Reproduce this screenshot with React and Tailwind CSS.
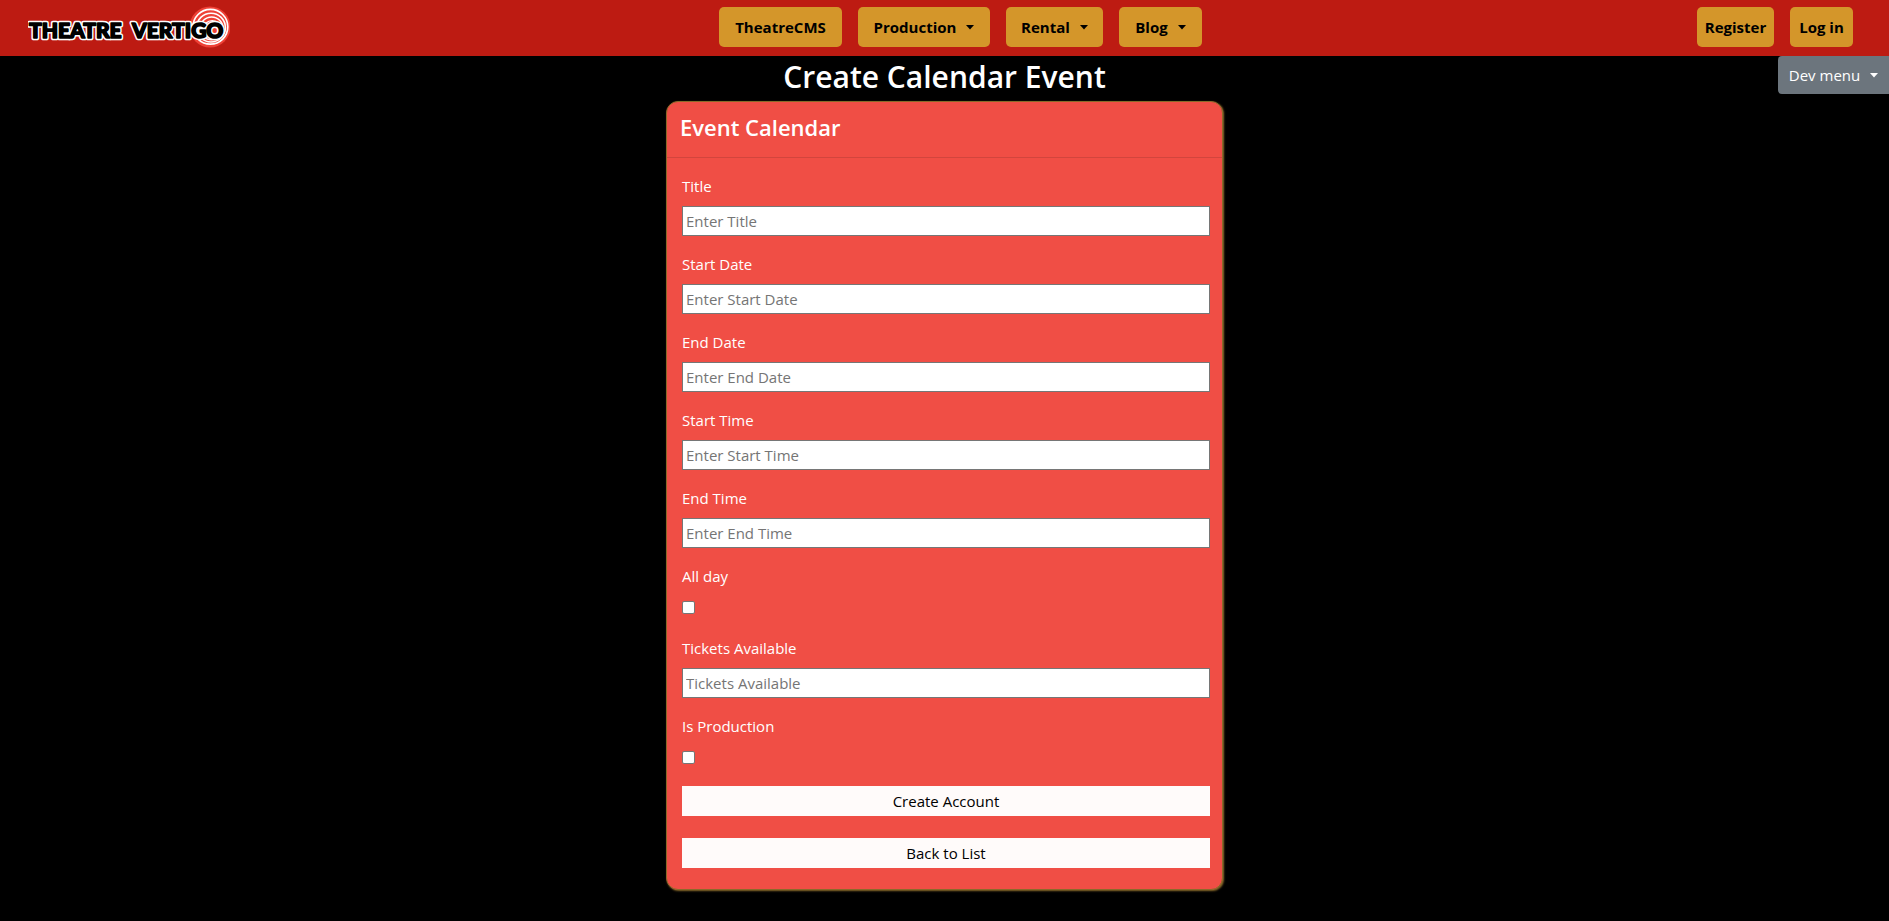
import React from "react";

function Caret() {
  return (
    <svg width="8" height="5" viewBox="0 0 8 5" className="ml-2.5 inline-block" aria-hidden="true">
      <path d="M0 0h8L4 4.4z" fill="currentColor" />
    </svg>
  );
}

function Logo() {
  return (
    <svg width="202" height="42" viewBox="0 0 202 42" role="img" aria-label="Theatre Vertigo">
      <circle cx="182" cy="21" r="20.5" fill="#ee4136" />
      <g fill="none" stroke="#fff">
        <circle cx="182.4" cy="20.8" r="17.4" strokeWidth="1.7" />
        <circle cx="183" cy="21.6" r="14.4" strokeWidth="1.6" />
        <circle cx="183.6" cy="22.4" r="11.4" strokeWidth="1.5" />
        <circle cx="184.2" cy="23.2" r="8.6" strokeWidth="1.4" />
        <circle cx="184.8" cy="24" r="6" strokeWidth="1.3" />
      </g>
      <g fontFamily="Lato, sans-serif" fontWeight="900" fontSize="21" strokeLinejoin="round" paintOrder="stroke">
        <g fill="#000" stroke="#fff" strokeWidth="4.6" aria-hidden="true">
          <text x="1" y="32">THEATRE</text>
          <text x="104" y="32">VERTIGO</text>
        </g>
        <g fill="#000" stroke="#000" strokeWidth="1.6">
          <text x="1" y="32">THEATRE</text>
          <text x="104" y="32">VERTIGO</text>
        </g>
      </g>
    </svg>
  );
}

const goldButton = "flex h-10 items-center justify-center rounded-[5px] bg-[#d4962a] text-[15px] font-bold text-black";

function NavButton({ label, menu, width }) {
  return (
    <button type="button" className={`${goldButton} ${width}`}>
      {label}
      {menu && <Caret />}
    </button>
  );
}

function TextField({ id, label, placeholder }) {
  return (
    <div className="flex flex-col gap-2">
      <label htmlFor={id} className="leading-6">{label}</label>
      <input
        id={id}
        type="text"
        placeholder={placeholder}
        className="h-[30px] w-full border border-[#767676] bg-white px-[3px] text-black placeholder:text-[#757575]"
      />
    </div>
  );
}

function CheckField({ id, label }) {
  return (
    <div className="flex flex-col gap-2">
      <label htmlFor={id} className="leading-6">{label}</label>
      <div className="flex h-6 items-start pt-[5px]">
        <input
          id={id}
          type="checkbox"
          className="size-[13px] appearance-none rounded-[2px] border border-[#767676] bg-white checked:bg-[#0075ff]"
        />
      </div>
    </div>
  );
}

export default function App() {
  return (
    <div className="min-h-screen bg-black font-['Open_Sans','Noto_Sans',sans-serif] text-[15px] text-white">
      <header className="flex h-14 items-center justify-between bg-[#bd1b12] pr-9 pl-7">
        <a href="#home" className="mb-0.5"><Logo /></a>
        <nav className="mr-1.5 mb-0.5 flex gap-4">
          <NavButton label="TheatreCMS" width="w-[123px]" />
          <NavButton label="Production" menu width="w-[132px]" />
          <NavButton label="Rental" menu width="w-[97px]" />
          <NavButton label="Blog" menu width="w-[83px]" />
        </nav>
        <div className="mb-0.5 flex gap-4">
          <NavButton label="Register" width="w-[77px]" />
          <NavButton label="Log in" width="w-[63px]" />
        </div>
      </header>

      <main className="relative flex flex-col items-center">
        <button
          type="button"
          className="absolute top-0 right-0 flex h-[38px] w-[111px] items-center justify-center rounded-l bg-[#6c757d]"
        >
          Dev menu
          <Caret />
        </button>
        <h1 className="mb-1 pt-px text-3xl leading-10 font-semibold">Create Calendar Event</h1>
        <section className="w-full max-w-[557px] rounded-xl border border-[#8a6a2a] bg-[#f04e45] shadow-[1px_1px_2px_#8a6a2a]">
          <h2 className="border-b border-[#d2453d] px-[13px] pt-[9px] pb-3.5 text-[22px] leading-8 font-semibold">
            Event Calendar
          </h2>
          <form className="flex flex-col gap-4 pt-4 pr-3 pb-[21px] pl-[15px]">
            <TextField id="title" label="Title" placeholder="Enter Title" />
            <TextField id="start-date" label="Start Date" placeholder="Enter Start Date" />
            <TextField id="end-date" label="End Date" placeholder="Enter End Date" />
            <TextField id="start-time" label="Start Time" placeholder="Enter Start Time" />
            <TextField id="end-time" label="End Time" placeholder="Enter End Time" />
            <CheckField id="all-day" label="All day" />
            <TextField id="tickets" label="Tickets Available" placeholder="Tickets Available" />
            <CheckField id="is-production" label="Is Production" />
            <div className="flex flex-col gap-[22px] text-black">
              <button type="button" className="h-[30px] bg-[#fffbfa]">Create Account</button>
              <button type="button" className="h-[30px] bg-[#fffbfa]">Back to List</button>
            </div>
          </form>
        </section>
      </main>
    </div>
  );
}
